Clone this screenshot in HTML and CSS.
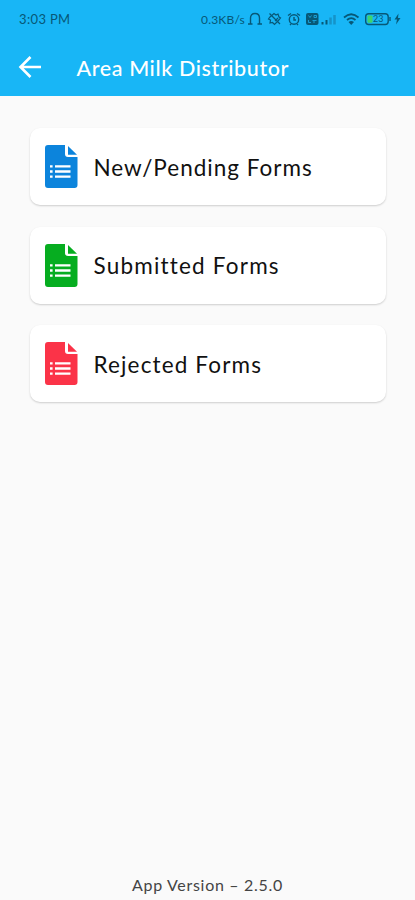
FILE: index.html
```html
<!DOCTYPE html>
<html lang="en">
<head>
    <meta charset="UTF-8">
    <meta name="viewport" content="width=device-width, initial-scale=1.0">
    <title>Area Milk Distributor</title>
    <link rel="stylesheet" href="styles.css">
</head>
<body>
    <!-- shared page icon, coloured by each card -->
    <svg class="symbols" width="0" height="0">
        <symbol id="form-icon" viewBox="0 0 33 43">
            <path fill="currentColor" d="M3 0H20V9Q20 12 23 12H32.500V40Q32.500 43 29.500 43H3Q0 43 0 40V3Q0 0 3 0Z"/>
            <path fill="currentColor" d="M23 1L32 9.8H23Z"/>
            <path stroke="#fff" stroke-width="2.3" d="M10 21.300H25.500M10 26.500H25.500M10 31.700H25.500M5 21.300H7.600M5 26.500H7.600M5 31.700H7.600"/>
        </symbol>
    </svg>

    <header class="header">
        <div class="status-bar">
            <span class="time">3:03 PM</span>
            <span class="speed">0.3KB/s</span>
            <svg class="status-icons" width="155" height="16" viewBox="247 11 155 16" fill="none" stroke="#075877" stroke-width="1.4">
                <!-- bell -->
                <path d="M248 24H252.500M257.500 24H262M250.500 24V18Q250.500 13.500 255 13.500Q259.500 13.500 259.500 18V24"/>
                <!-- vibrate off -->
                <path stroke-width="1.2" d="M270 17L274 13.500L276 15L278 14L279 17L280.500 18L278 21L274.500 24.500L272.500 22.500L270 23L270.500 20L268.500 19ZM269.500 13.500L280 24M275 21L278 18"/>
                <!-- alarm -->
                <circle cx="294" cy="19.500" r="4.700"/>
                <path d="M288 15.500L291 13.500M297 13.500L300 15.500M294 17V20H296M291 24L290 25M297 24L298 25"/>
                <!-- volte -->
                <rect x="306" y="13" width="12.500" height="12" rx="2" fill="#075877" stroke="none"/>
                <path stroke="#18a5df" stroke-width="0.900" d="M308.500 15.500L310 17.500L311.500 15.500M314 15.500H316.500V17.500H314ZM308.500 20V22.500H311M312.500 20.500H316.500M314 20.500V23"/>
                <!-- signal -->
                <path stroke-width="2" d="M322.500 24.500V22M326.500 24.500V20"/>
                <path stroke="#1593c8" stroke-width="2.500" d="M330.500 24.500V17.500M334.500 24.500V15"/>
                <!-- wifi -->
                <path stroke-width="1.700" d="M344 17.500Q351.200 11 358.500 17.500M347 20Q351.200 16.300 355.500 20"/>
                <path fill="#075877" stroke="none" d="M348.500 22Q351.200 20 354 22L351.200 25Z"/>
                <!-- battery -->
                <rect x="365.700" y="13.700" width="22.500" height="10.800" rx="3"/>
                <rect x="367.500" y="15.500" width="5" height="7.300" rx="1" fill="#3fd36b" stroke="none"/>
                <path d="M390 17V21"/>
                <text x="373" y="22.300" class="battery-level">23</text>
                <path fill="#075877" stroke="none" d="M398.500 13.500L394.500 19.500H397L396 24.500L400.500 18H398Z"/>
            </svg>
        </div>
        <div class="toolbar">
            <svg class="back" width="24" height="22" viewBox="0 0 24 22">
                <path fill="none" stroke="#fff" stroke-width="2.6" d="M23 11H3M12.500 1L2.500 11L12.500 21"/>
            </svg>
            <h1 class="title">Area Milk Distributor</h1>
        </div>
    </header>

    <main class="forms">
        <a class="card">
            <svg class="icon pending"><use href="#form-icon"/></svg>
            <span class="label">New/Pending Forms</span>
        </a>
        <a class="card">
            <svg class="icon submitted"><use href="#form-icon"/></svg>
            <span class="label label-submitted">Submitted Forms</span>
        </a>
        <a class="card">
            <svg class="icon rejected"><use href="#form-icon"/></svg>
            <span class="label label-rejected">Rejected Forms</span>
        </a>
    </main>

    <footer class="version">App Version – 2.5.0</footer>
</body>
</html>
```
FILE: styles.css
```css
body {
    margin: 0;
    height: 900px;
    display: flex;
    flex-direction: column;
    overflow: hidden;
    background-color: #fafafa;
    font-family: Lato, "Liberation Sans", sans-serif;
}

.symbols {
    display: none;
}

.header {
    height: 96px;
    flex: none;
    background-color: #18b6f6;
}

.status-bar {
    display: flex;
    align-items: center;
    height: 38px;
    padding: 0 13px 0 19px;
    color: #075877;
    font-size: 13px;
}

.time {
    letter-spacing: 0.35px;
}

.speed {
    margin-left: auto;
    margin-right: 2px;
    font-size: 12px;
    letter-spacing: 0.2px;
}

.status-icons {
    flex: none;
}

.battery-level {
    fill: #075877;
    stroke: none;
    font-size: 9px;
}

.toolbar {
    display: flex;
    align-items: center;
    height: 58px;
    padding-left: 18px;
}

.title {
    margin: 1px 0 0 34.5px;
    color: #fff;
    font-size: 21.5px;
    font-weight: 500;
    line-height: 26px;
    letter-spacing: 0.6px;
    white-space: nowrap;
}

.forms {
    display: flex;
    flex-direction: column;
    gap: 21.5px;
    padding: 32px 29.5px 0 30px;
}

.card {
    display: flex;
    align-items: center;
    box-sizing: border-box;
    height: 77px;
    padding-left: 14.5px;
    border-radius: 10px;
    background-color: #fff;
    box-shadow: 0 1px 2px rgba(0, 0, 0, 0.18);
}

.icon {
    width: 33px;
    height: 43px;
    flex: none;
}

.pending {
    color: #0c84dc;
}

.submitted {
    color: #06ad20;
}

.rejected {
    color: #fb3348;
}

.label {
    margin: 2px 0 0 16px;
    color: #111;
    font-size: 22.5px;
    line-height: 28px;
    letter-spacing: 1px;
    white-space: nowrap;
}

.label-submitted {
    letter-spacing: 1.2px;
}

.label-rejected {
    letter-spacing: 1.15px;
}

.version {
    margin-top: auto;
    padding-bottom: 5px;
    color: #444;
    font-size: 16px;
    line-height: 20px;
    letter-spacing: 0.7px;
    text-align: center;
}
```
